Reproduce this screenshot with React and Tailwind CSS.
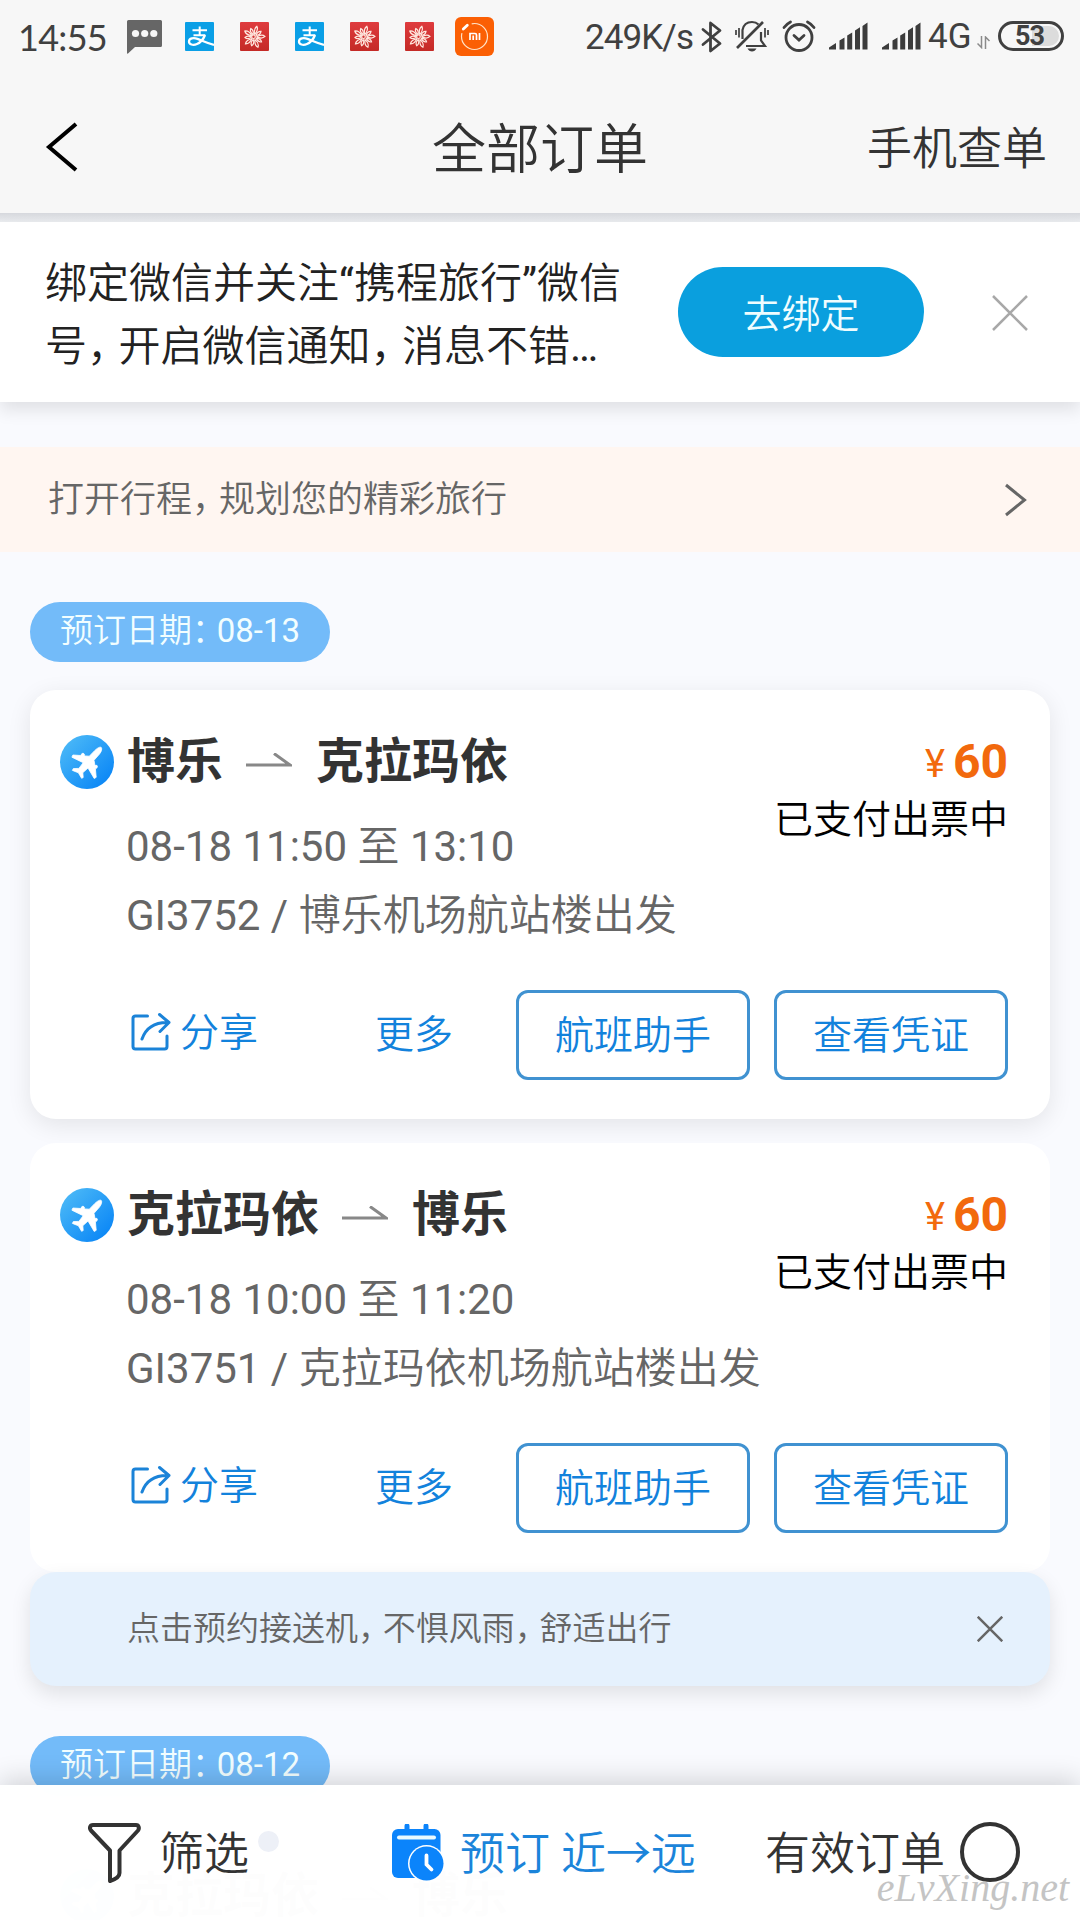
import React from "react";

/* Chinese commas and colons are set tighter than a full em; Latin runs use the regular weight. */
function Mix({ children }) {
  return children.split(/([，：]|[A-Za-z0-9:\/\- ]+)/).map((part, i) => {
    if (part === "，" || part === "：") {
      return (
        <span key={i} className="tracking-[0.25em] [font-feature-settings:'halt']">{part}</span>
      );
    }
    if (/^[A-Za-z0-9:\/\- ]+$/.test(part)) {
      return <span key={i} className="whitespace-pre font-normal">{part}</span>;
    }
    return part;
  });
}

function ChatIcon() {
  return (
    <svg className="ml-[21px] mt-[2px] h-[34px] w-[35px]" viewBox="0 0 35 34">
      <path d="M1.5 0h32A1.5 1.5 0 0 1 35 1.5v24a1.5 1.5 0 0 1-1.5 1.5H8L1 33.500Q0 34 0 33V1.500A1.500 1.500 0 0 1 1.500 0z" fill="#666" />
      <circle cx="8.500" cy="13.500" r="3.600" fill="#f7f7f7" />
      <circle cx="17.700" cy="13.500" r="3.600" fill="#f7f7f7" />
      <circle cx="26.800" cy="13.500" r="3.600" fill="#f7f7f7" />
    </svg>
  );
}

function AlipayIcon() {
  return (
    <svg className="h-[29px] w-[29px]" viewBox="0 0 29 29">
      <rect width="29" height="29" rx="1" fill="#0a9fe6" />
      <g fill="none" stroke="#fff" strokeWidth="2">
        <path d="M7.500 8.200h14.500M14.700 4.500v9M8.500 13.200h11.800" />
        <path d="M20 13c-1.500 4-4.500 7.500-8 9-4 1.700-8 .5-8-2.500 0-3.200 4.500-4 8.500-2.600 4.500 1.600 9.500 4.300 16.500 6" strokeWidth="2.300" />
      </g>
    </svg>
  );
}

function FlowerIcon() {
  const angles = [0, 36, 72, 108, 144, 180, 216, 252, 288, 324];
  return (
    <svg className="h-[29px] w-[29px]" viewBox="0 0 29 29">
      <defs>
        <linearGradient id="red" x1="0" y1="0" x2="0" y2="1">
          <stop offset="0" stopColor="#df3b3e" />
          <stop offset="1" stopColor="#c42a26" />
        </linearGradient>
      </defs>
      <rect width="29" height="29" rx="1" fill="url(#red)" />
      <g fill="none" stroke="#ffe9e0" strokeWidth="1.200">
        {angles.map((a, i) => (
          <path
            key={a}
            d={i % 2 ? "M14 12.500Q11.500 8.500 14 6Q16.500 8.500 14 12.500" : "M14 12.500Q11.200 7 14 4Q16.800 7 14 12.500"}
            transform={`rotate(${a + 15} 14 15)`}
          />
        ))}
        <circle cx="13.500" cy="14.700" r="1.800" />
      </g>
    </svg>
  );
}

function MiIcon() {
  return (
    <svg className="ml-[21px] h-[39px] w-[39px]" viewBox="0 0 39 39">
      <rect width="39" height="39" rx="6" fill="#fb5f04" />
      <circle cx="19.500" cy="19.500" r="13" fill="none" stroke="#ffe3c8" strokeWidth="1.200" strokeDasharray="68 14" strokeDashoffset="-58" />
      <path d="M8.300 12l4-3.800" stroke="#fff" strokeWidth="2.800" strokeLinecap="round" />
      <path d="M15 23v-6.500h5q1.500 0 1.500 1.500v5M18.200 18.500v4.500M24.500 16v7" stroke="#fff" strokeWidth="1.700" fill="none" />
    </svg>
  );
}

function Signal() {
  return (
    <svg className="h-[28px] w-[39px]" viewBox="0 0 39 28" fill="#3c3c3c">
      <path d="M0 27.500v-2l7-4.500v6.500zM10.500 27.500v-9l5-3v12zM18.200 27.500V13.500l5-3v17zM26 27.500V8.500l5-3.300v22.300zM33.500 27.500V4L38.500.5v27z" />
    </svg>
  );
}

function StatusBar() {
  return (
    <div className="flex h-[74px] items-center pb-[2px] pl-[18px] pr-[16px] font-normal text-[#404040]">
      <span className="mt-[1px] w-[88px] whitespace-nowrap font-['Lato'] text-[36px] leading-[40px] tracking-[-0.7px]">14:55</span>
      <ChatIcon />
      <div className="ml-[23px] flex gap-[26px]">
        <AlipayIcon />
        <FlowerIcon />
        <AlipayIcon />
        <FlowerIcon />
        <FlowerIcon />
      </div>
      <MiIcon />
      <span className="ml-auto mt-[3px] w-[110px] whitespace-nowrap text-[35px] leading-[40px] tracking-[-0.9px]">249K/s</span>
      <svg className="ml-[6px] mt-[1px] h-[32px] w-[21px]" viewBox="0 0 21 32" fill="none" stroke="#404040" strokeWidth="2.800" strokeLinejoin="round" strokeLinecap="round">
        <path d="M2 8.500l17 14L9.500 30V2L19 9.500 2 23.500" />
      </svg>
      <svg className="ml-[13px] h-[32px] w-[34px]" viewBox="0 0 34 32" fill="none" stroke="#404040" strokeWidth="2.200">
        <path d="M2 28L28 2" strokeWidth="2.600" />
        <path d="M7.500 19V10Q9 2 17 2q4 0 6.500 2.500M26 12v8.500l4 5.500H11" />
        <path d="M12.500 28.500h9q-1.500 3-4.500 3t-4.500-3z" fill="#404040" stroke="none" />
        <path d="M1 10v5M4 8v9.500M33 10v5M30 8v9.500" strokeWidth="1.700" />
      </svg>
      <svg className="ml-[13px] h-[32px] w-[34px]" viewBox="0 0 34 32" fill="none" stroke="#404040" strokeWidth="2.800" strokeLinecap="round">
        <circle cx="17" cy="17.500" r="13" />
        <path d="M12 15.500l5 4.500 5-4.500M2 7.500Q4.500 4 8.500 2M32 7.500Q29.500 4 25.500 2" />
      </svg>
      <div className="ml-[13px] flex gap-[14px]">
        <Signal />
        <Signal />
      </div>
      <span className="ml-[7px] mt-[2px] w-[48px] whitespace-nowrap text-[35px] leading-[40px]">4G</span>
      <svg className="ml-[1px] mt-[12px] h-[13px] w-[13px]" viewBox="0 0 13 13" fill="none" stroke="#8a8a8a" strokeWidth="1.500">
        <path d="M4.500 0v11.500L0.500 7.500M8.500 13V1l4 4" />
      </svg>
      <div className="ml-[8px] flex h-[30px] w-[66px] items-center justify-center rounded-full border-[3px] border-[#404040] bg-[linear-gradient(90deg,#f7f7f7_52%,#dcdcdc_52%)] bg-clip-content p-[2px]">
        <span className="-ml-[3px] text-[27px] font-bold leading-none tracking-[-1px]">53</span>
      </div>
    </div>
  );
}

function Cross({ className }) {
  return (
    <svg className={className} viewBox="0 0 36 36" fill="none" stroke="currentColor">
      <path d="M1 1l34 34M35 1L1 35" vectorEffect="non-scaling-stroke" />
    </svg>
  );
}

function DatePill({ date }) {
  return (
    <div className="ml-[30px] flex h-[60px] w-[300px] items-center rounded-full bg-[#73bbf9] pl-[30px] text-[33px] leading-[48px] text-[#f2feff]">
      <span className="-mt-[2px]"><Mix>{`预订日期：${date}`}</Mix></span>
    </div>
  );
}

function PlaneBadge() {
  return (
    <svg className="h-[54px] w-[54px]" viewBox="0 0 54 54">
      <defs>
        <linearGradient id="sky" x1="0.1" y1="0.1" x2="0.9" y2="0.9">
          <stop offset="0" stopColor="#4ab8f7" />
          <stop offset="1" stopColor="#0a86f6" />
        </linearGradient>
      </defs>
      <circle cx="27" cy="27" r="27" fill="url(#sky)" />
      <path
        fill="#fff"
        stroke="#fff"
        strokeWidth="0.800"
        strokeLinejoin="round"
        d="M41.300 12.600c.9 1 .2 4-1.800 6.400L34 25.300l1 5.200 1.800-.2c.9.8.7 2.400-.3 2.900l-1.100.5.8 8.600-2 1.200-6.200-10.500-5.200 4.700.4 4.800-1.600.8-3.200-5.500-6-2.400.9-1.800 5.600-.2 4.300-5.700-11.300-5.500 1-2.200 8 .5.8-1.700c.9-.8 2.300-.5 2.700.4v1.700l4.900.3 5.600-5.800c2.300-2.200 5-4 6.400-2.900z"
      />
    </svg>
  );
}

function ShareIcon() {
  return (
    <svg className="h-[40px] w-[40px]" viewBox="0 0 40 40" fill="none" stroke="#1b83d8" strokeWidth="3" strokeLinecap="round" strokeLinejoin="round">
      <path d="M16.500 4H4.500Q2 4 2 6.500v28Q2 37 4.500 37h29q2.500 0 2.500-2.500V24" />
      <path d="M11 27Q17 10 37 10.500M28.500 2.500l9.500 8L29 19.500" />
    </svg>
  );
}

function Route({ from, to }) {
  return (
    <h2 className="flex h-[70px] items-center whitespace-nowrap text-[48px] font-bold leading-none text-[#333]">
      <span className="mt-[1px]">{from}</span>
      <svg className="ml-[23px] mr-[24px] h-[16px] w-[46px]" viewBox="0 0 46 16" fill="none" stroke="#888" strokeWidth="3">
        <path d="M0 12h44L28 .5" />
      </svg>
      <span className="mt-[1px]">{to}</span>
    </h2>
  );
}

function OrderCard({ from, to, time, detail, className }) {
  return (
    <article className={`mx-[30px] h-[429px] rounded-[26px] bg-white px-[30px] pt-[36px] ${className}`}>
      <div className="flex">
        <div className="mt-[9px]"><PlaneBadge /></div>
        <div className="ml-[13px] flex-1 whitespace-nowrap">
          <Route from={from} to={to} />
          <p className="-ml-[1px] mt-[16px] h-[69px] text-[42px] leading-[69px] text-[#666]"><Mix>{time}</Mix></p>
          <p className="-ml-[1px] h-[69px] text-[42px] leading-[69px] text-[#666]"><Mix>{detail}</Mix></p>
        </div>
        <div className="mr-[12px] text-right">
          <p className="flex h-[72px] items-center justify-end text-[#f2690d]">
            <span className="mr-[8px] mt-[4px] text-[38px] font-normal leading-none">¥</span>
            <span className="text-[48px] font-bold leading-none">60</span>
          </p>
          <p className="-mt-[8px] text-[39px] leading-[60px] text-black">已支付出票中</p>
        </div>
      </div>
      <div className="ml-[71px] mr-[12px] mt-[40px] flex items-center text-[39px] leading-none text-[#1282dc]">
        <div className="-mt-[7px]"><ShareIcon /></div>
        <span className="-mt-[4px] ml-[9px]">分享</span>
        <span className="mt-[1px] ml-[117px]">更多</span>
        <button className="ml-auto h-[90px] w-[234px] rounded-[12px] border-[3px] border-[#4092d1] pt-[2px]">航班助手</button>
        <button className="ml-[24px] h-[90px] w-[234px] rounded-[12px] border-[3px] border-[#4092d1] pt-[2px]">查看凭证</button>
      </div>
    </article>
  );
}

function BottomBar() {
  return (
    <nav className="absolute inset-x-0 bottom-0 flex h-[135px] items-center bg-white/[0.992] text-[45px] leading-none text-[#333] shadow-[0_-6px_24px_rgba(0,0,0,0.15)]">
      <svg className="ml-[88px] h-[60px] w-[53px]" viewBox="0 0 53 60" fill="none" stroke="#333" strokeWidth="4" strokeLinejoin="round">
        <path d="M5 2h43c3 0 3.500 3.500 2 5.500L31.500 27.500V50q0 5-9.500 8V27.500L3 7.500C1 5 2 2 5 2z" />
      </svg>
      <span className="mt-[3px] ml-[18px]">筛选</span>
      <i className="-mt-[22px] ml-[9px] h-[21px] w-[21px] rounded-full bg-[#edf0f7]" />
      <svg className="ml-[113px] h-[58px] w-[52px]" viewBox="0 0 52 58">
        <path d="M15 2v8M34 2v8" stroke="#0b84fb" strokeWidth="5" strokeLinecap="round" />
        <rect y="5" width="48.500" height="49" rx="6" fill="#0b84fb" />
        <path d="M7 13.500h35" stroke="#eafaff" strokeWidth="4" strokeLinecap="round" />
        <circle cx="34.500" cy="39.500" r="18.500" fill="#fff" />
        <circle cx="34.500" cy="39.500" r="17" fill="#0b84fb" />
        <path d="M34.500 31.500v9l5 5" stroke="#fff" strokeWidth="3.800" fill="none" strokeLinecap="round" />
      </svg>
      <span className="mt-[3px] ml-[16px] whitespace-nowrap text-[#1b84da]">预订 近→远</span>
      <span className="mt-[3px] ml-auto">有效订单</span>
      <i className="-mt-[1px] ml-[15px] mr-[60px] h-[60px] w-[60px] rounded-full border-[4px] border-[#333]" />
      <span className="absolute bottom-[12px] right-[11px] font-['Liberation_Serif',serif] text-[40px] font-normal italic text-[#c4c4c4]">eLvXing.net</span>
    </nav>
  );
}

export default function App() {
  return (
    <div className="relative h-[1920px] w-[1080px] overflow-hidden bg-[#f9fafe] font-['Roboto','Noto_Sans_CJK_SC',sans-serif] font-[350] [&_span]:shrink-0">
      <header className="h-[213px] bg-[#f7f7f7]">
        <StatusBar />
        <div className="grid h-[146px] grid-cols-[1fr_auto_1fr] items-center text-[#333]">
          <svg className="ml-[45px] h-[52px] w-[34px]" viewBox="0 0 34 52" fill="none" stroke="#000" strokeWidth="4">
            <path d="M31 3L4 26l27 23" />
          </svg>
          <h1 className="mt-[7px] text-[54px] leading-none">全部订单</h1>
          <span className="mr-[33px] mt-[5px] text-right text-[45px] leading-none">手机查单</span>
        </div>
      </header>
      <div className="h-[9px] bg-linear-to-b from-[#d6d8dd] to-[#ebedf0]" />
      <section className="flex h-[180px] items-center bg-white shadow-[0_8px_16px_rgba(0,0,0,0.10)]">
        <p className="ml-[45px] mt-[5px] w-[633px] whitespace-nowrap text-[42px] leading-[63px] text-[#222]">
          绑定微信并关注<span className="font-normal">“</span>携程旅行<span className="font-normal">”</span>微信<br />
          <Mix>号，开启微信通知，消息不错</Mix><span className="font-normal">…</span>
        </p>
        <button className="h-[90px] w-[246px] rounded-full bg-[#0a9fde] pt-[6px] text-[39px] leading-none text-[#effdff]">去绑定</button>
        <Cross className="ml-[68px] mt-[2px] h-[36px] w-[36px] stroke-[2.5px] text-[#a8a8a8]" />
      </section>
      <section className="mt-[45px] flex h-[105px] items-center justify-between bg-[#fff6f1] pl-[48px] pr-[53px] text-[36px] text-[#666]">
        <span className="mt-[1px]"><Mix>打开行程，规划您的精彩旅行</Mix></span>
        <svg className="h-[34px] w-[23px]" viewBox="0 0 23 34" fill="none" stroke="#666" strokeWidth="3">
          <path d="M2 2l18.500 15L2 32" />
        </svg>
      </section>
      <div className="mt-[50px]"><DatePill date="08-13" /></div>
      <OrderCard className="mt-[28px] shadow-[0_6px_24px_rgba(0,0,0,0.09)]" from="博乐" to="克拉玛依" time="08-18 11:50 至 13:10" detail="GI3752 / 博乐机场航站楼出发" />
      <div className="mt-[24px]">
        <OrderCard className="" from="克拉玛依" to="博乐" time="08-18 10:00 至 11:20" detail="GI3751 / 克拉玛依机场航站楼出发" />
        <div className="mx-[30px] flex h-[114px] items-center justify-between rounded-[26px] bg-[#e5f1fd] pl-[97px] pr-[47px] text-[33px] text-[#666] shadow-[0_8px_20px_rgba(0,0,0,0.10)]">
          <span><Mix>点击预约接送机，不惧风雨，舒适出行</Mix></span>
          <Cross className="h-[26px] w-[26px] stroke-[2.5px] text-[#666]" />
        </div>
      </div>
      <div className="mt-[50px]"><DatePill date="08-12" /></div>
      {/* Top of the next order, showing faintly through the bottom bar */}
      <article className="mx-[30px] mt-[28px] flex h-[96px] rounded-t-[26px] bg-white px-[30px] pt-[36px]">
        <div className="mt-[9px]"><PlaneBadge /></div>
        <div className="ml-[13px]"><Route from="克拉玛依" to="博乐" /></div>
      </article>
      <BottomBar />
    </div>
  );
}
